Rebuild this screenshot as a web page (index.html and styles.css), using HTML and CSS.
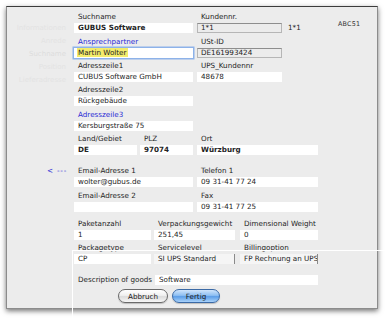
FILE: index.html
```html
<!DOCTYPE html>
<html lang="de">
<head>
    <meta charset="UTF-8">
    <meta name="viewport" content="width=device-width, initial-scale=1.0">
    <title>Ansprechpartner</title>
    <link rel="stylesheet" href="styles.css">
</head>
<body>
    <div class="sheet">
        <section class="top">
            <!-- faint window content seen through the sheet -->
            <div class="col col-ghost">
                <span>Informationen</span>
                <span>Anrede</span>
                <span class="ghost-strong">Suchname</span>
                <span>Position</span>
                <span>Lieferadresse</span>
            </div>
            <div class="col col-left">
                <div class="grp">
                    <span class="lbl">Suchname</span>
                    <span class="field bold">GUBUS Software</span>
                </div>
                <div class="grp">
                    <span class="lbl blue">Ansprechpartner</span>
                    <span class="field focus"><span class="hilite">Martin Wolter</span></span>
                </div>
                <div class="grp">
                    <span class="lbl">Adresszeile1</span>
                    <span class="field">CUBUS Software GmbH</span>
                </div>
                <div class="grp">
                    <span class="lbl">Adresszeile2</span>
                    <span class="field">Rückgebäude</span>
                </div>
                <div class="grp">
                    <span class="lbl blue">Adresszeile3</span>
                    <span class="field">Kersburgstraße 75</span>
                </div>
            </div>
            <div class="col col-right">
                <div class="grp">
                    <span class="lbl">Kundennr.</span>
                    <span class="field boxed">1*1</span>
                </div>
                <div class="grp">
                    <span class="lbl">USt-ID</span>
                    <span class="field boxed">DE161993424</span>
                </div>
                <div class="grp">
                    <span class="lbl">UPS_Kundennr</span>
                    <span class="field">48678</span>
                </div>
            </div>
            <div class="col col-extra">
                <span class="plain">1*1</span>
            </div>
            <div class="col col-code">
                <span class="code">ABC51</span>
            </div>
        </section>

        <section class="row row-land">
            <div class="grp w-land">
                <span class="lbl">Land/Gebiet</span>
                <span class="field bold">DE</span>
            </div>
            <div class="grp w-plz">
                <span class="lbl">PLZ</span>
                <span class="field bold">97074</span>
            </div>
            <div class="grp w-ort">
                <span class="lbl">Ort</span>
                <span class="field bold">Würzburg</span>
            </div>
        </section>

        <section class="row row-mail">
            <span class="arrow blue">&lt; ---</span>
            <div class="col col-left">
                <div class="grp">
                    <span class="lbl">Email-Adresse 1</span>
                    <span class="field">wolter@gubus.de</span>
                </div>
                <div class="grp">
                    <span class="lbl">Email-Adresse 2</span>
                    <span class="field"></span>
                </div>
            </div>
            <div class="col w-ort">
                <div class="grp">
                    <span class="lbl">Telefon 1</span>
                    <span class="field">09 31-41 77 24</span>
                </div>
                <div class="grp">
                    <span class="lbl">Fax</span>
                    <span class="field">09 31-41 77 25</span>
                </div>
            </div>
        </section>

        <section class="row row-ship">
            <div class="grp w-c1">
                <span class="lbl">Paketanzahl</span>
                <span class="field">1</span>
            </div>
            <div class="grp w-c2">
                <span class="lbl clip">Verpackungsgewicht</span>
                <span class="field">251,45</span>
            </div>
            <div class="grp w-c3">
                <span class="lbl">Dimensional Weight</span>
                <span class="field">0</span>
            </div>
        </section>

        <section class="row">
            <div class="grp w-c1">
                <span class="lbl">Packagetype</span>
                <span class="field">CP</span>
            </div>
            <div class="grp w-c2">
                <span class="lbl">Servicelevel</span>
                <span class="field popup">SI UPS Standard</span>
            </div>
            <div class="grp w-c3">
                <span class="lbl">Billingoption</span>
                <span class="field popup">FP Rechnung an UPS</span>
            </div>
        </section>

        <section class="row row-desc">
            <span class="lbl desc-lbl">Description of goods</span>
            <span class="field desc-field">Software</span>
        </section>

        <footer class="buttons">
            <button class="btn">Abbruch</button>
            <button class="btn btn-default">Fertig</button>
        </footer>
    </div>

    <div class="callout callout-h"></div>
    <div class="callout callout-v"></div>
</body>
</html>
```

FILE: styles.css
```css
:root {
    --panel: #ececec;
    --text: #242424;
    --label-blue: #2b2bd6;
    --font: "DejaVu Sans", Verdana, sans-serif;
}

* {
    margin: 0;
    padding: 0;
    box-sizing: border-box;
}

html, body {
    height: 324px;
    background: #ffffff;
    overflow: hidden;
}

body {
    font-family: var(--font);
    font-size: 7.2px;
    color: var(--text);
}

.sheet {
    margin: 6px 0 0 6px;
    width: 372px;
    height: 303px;
    background: var(--panel);
    border: 1px solid #8c8c8c;
    border-top-color: #3c3c3c;
    box-shadow: 0 2px 5px rgba(0, 0, 0, 0.55);
    display: flex;
    flex-direction: column;
}

.top {
    display: flex;
    padding: 5.3px 0 0 0;
}

.row {
    display: flex;
    padding-left: 67px;
}

.col {
    display: flex;
    flex-direction: column;
}

.col-ghost {
    width: 67px;
    padding: 12px 8px 0 0;
    align-items: flex-end;
    gap: 4px;
    color: #e3e3e3;
    font-size: 7px;
    line-height: 9px;
}

.ghost-strong {
    color: #dddddd;
}

.col-left {
    width: 119px;
    margin-right: 4px;
}

.col-right {
    width: 85px;
}

.col-extra {
    padding: 11px 0 0 6px;
    width: 56px;
}

.col-code {
    padding-top: 7.5px;
}

.grp {
    display: flex;
    flex-direction: column;
    margin-bottom: 3.4px;
}

.lbl {
    display: block;
    height: 9px;
    line-height: 9px;
    padding-left: 4px;
    margin-bottom: 2px;
    white-space: nowrap;
}

.lbl.clip {
    overflow: hidden;
    width: 79px;
}

.blue {
    color: var(--label-blue);
}

.field {
    display: block;
    height: 10px;
    line-height: 10px;
    padding-left: 4px;
    background: #ffffff;
    white-space: nowrap;
    overflow: hidden;
}

.bold {
    font-weight: bold;
}

.field.boxed {
    background: transparent;
    border: 1px solid #b6b6b6;
    border-top-color: #8e8e8e;
    line-height: 8px;
    padding-left: 3px;
}

.field.focus {
    box-shadow: 0 0 0 1.5px #8db2e9;
    padding-left: 3px;
}

.hilite {
    background: #f4ec6c;
    padding: 0 1px;
}

.field.popup {
    background: #f5f5f5;
    border-right: 1px solid #8a8a8a;
}

.plain {
    display: block;
    line-height: 10px;
}

.code {
    font-size: 6.4px;
    color: #333333;
    letter-spacing: 0.2px;
}

.w-land {
    width: 63px;
    margin-right: 3px;
}

.w-plz {
    width: 53px;
    margin-right: 4px;
}

.w-ort {
    width: 121px;
}

.row-mail {
    margin-top: 7.6px;
    padding-left: 40px;
}

.arrow {
    width: 27px;
    line-height: 9px;
    letter-spacing: 0.8px;
}

.row-ship {
    margin-top: 4px;
}

.w-c1 {
    width: 77px;
    margin-right: 3px;
}

.w-c2 {
    width: 81px;
    margin-right: 5px;
}

.w-c3 {
    width: 78px;
}

.row-desc {
    margin-top: 7.6px;
    align-items: center;
}

.desc-lbl {
    width: 81px;
    margin-bottom: 0;
    line-height: 10px;
    height: 10px;
}

.desc-field {
    width: 163px;
}

.buttons {
    display: flex;
    gap: 4px;
    padding: 4px 0 0 111px;
}

.btn {
    font-family: var(--font);
    font-size: 7.2px;
    color: #1a1a1a;
    width: 50px;
    height: 14px;
    border-radius: 7px;
    border: 1px solid #6a6a6a;
    background: linear-gradient(#ffffff, #f0f0f0 45%, #dcdcdc 55%, #f6f6f6);
    box-shadow: 0 1px 1px rgba(0, 0, 0, 0.2);
}

.btn-default {
    width: 48px;
    border-color: #3b6aa6;
    background: linear-gradient(#cfe4fb, #8ebff2 45%, #5c9ee8 55%, #a9d2fa);
}

.callout {
    position: absolute;
    background: #ffffff;
    z-index: 2;
}

.callout-h {
    left: 72px;
    top: 250px;
    width: 318px;
    height: 1px;
}

.callout-v {
    left: 72px;
    top: 250px;
    width: 1px;
    height: 74px;
}
```
